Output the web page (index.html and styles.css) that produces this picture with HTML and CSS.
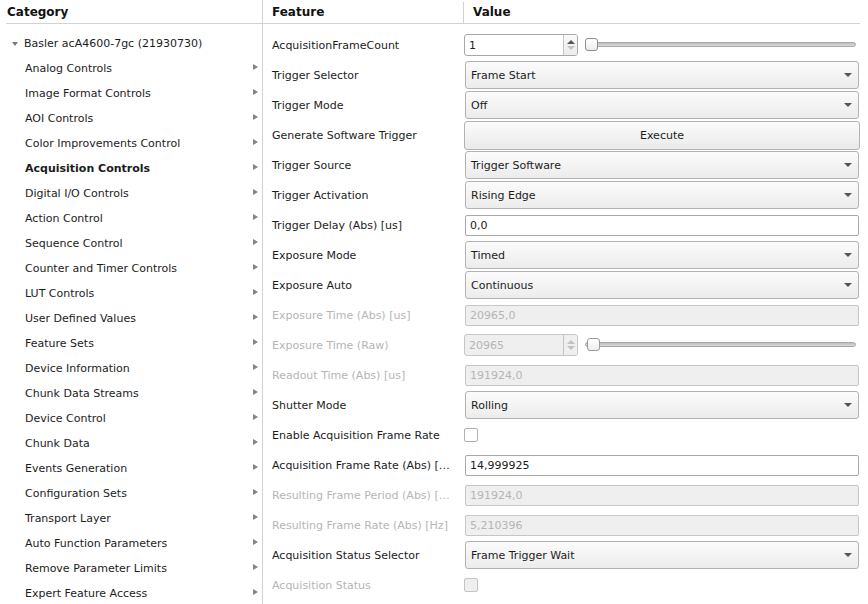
FILE: index.html
```html
<!DOCTYPE html>
<html>
<head>
<meta charset="utf-8">
<link rel="stylesheet" href="styles.css">
</head>
<body>
<div class="app">
  <aside class="cat">
    <div class="cat-hdr">Category</div>
    <ul class="tree">
      <li class="root"><span class="tri-down"></span>Basler acA4600-7gc (21930730)</li>
      <li class="item">Analog Controls<span class="tri-right"></span></li>
      <li class="item">Image Format Controls<span class="tri-right"></span></li>
      <li class="item">AOI Controls<span class="tri-right"></span></li>
      <li class="item">Color Improvements Control<span class="tri-right"></span></li>
      <li class="item sel">Acquisition Controls<span class="tri-right"></span></li>
      <li class="item">Digital I/O Controls<span class="tri-right"></span></li>
      <li class="item">Action Control<span class="tri-right"></span></li>
      <li class="item">Sequence Control<span class="tri-right"></span></li>
      <li class="item">Counter and Timer Controls<span class="tri-right"></span></li>
      <li class="item">LUT Controls<span class="tri-right"></span></li>
      <li class="item">User Defined Values<span class="tri-right"></span></li>
      <li class="item">Feature Sets<span class="tri-right"></span></li>
      <li class="item">Device Information<span class="tri-right"></span></li>
      <li class="item">Chunk Data Streams<span class="tri-right"></span></li>
      <li class="item">Device Control<span class="tri-right"></span></li>
      <li class="item">Chunk Data<span class="tri-right"></span></li>
      <li class="item">Events Generation<span class="tri-right"></span></li>
      <li class="item">Configuration Sets<span class="tri-right"></span></li>
      <li class="item">Transport Layer<span class="tri-right"></span></li>
      <li class="item">Auto Function Parameters<span class="tri-right"></span></li>
      <li class="item">Remove Parameter Limits<span class="tri-right"></span></li>
      <li class="item">Expert Feature Access<span class="tri-right"></span></li>
    </ul>
  </aside>
  <main class="feat">
    <div class="feat-hdr">
      <div class="hcell hfeat">Feature</div>
      <div class="hcell hval">Value</div>
    </div>
    <div class="rows">
      <div class="row">
        <div class="lbl">AcquisitionFrameCount</div>
        <div class="val spin-row">
          <div class="spin"><span class="spin-text">1</span><span class="spin-btns"><span class="up"></span><span class="dn dim"></span></span></div>
          <div class="slider"><span class="groove"></span><span class="handle"></span></div>
        </div>
      </div>
      <div class="row"><div class="lbl">Trigger Selector</div><div class="val"><div class="combo">Frame Start<span class="arrow"></span></div></div></div>
      <div class="row"><div class="lbl">Trigger Mode</div><div class="val"><div class="combo">Off<span class="arrow"></span></div></div></div>
      <div class="row"><div class="lbl">Generate Software Trigger</div><div class="val"><div class="btn">Execute</div></div></div>
      <div class="row"><div class="lbl">Trigger Source</div><div class="val"><div class="combo">Trigger Software<span class="arrow"></span></div></div></div>
      <div class="row"><div class="lbl">Trigger Activation</div><div class="val"><div class="combo">Rising Edge<span class="arrow"></span></div></div></div>
      <div class="row"><div class="lbl">Trigger Delay (Abs) [us]</div><div class="val"><div class="field">0,0</div></div></div>
      <div class="row"><div class="lbl">Exposure Mode</div><div class="val"><div class="combo">Timed<span class="arrow"></span></div></div></div>
      <div class="row"><div class="lbl">Exposure Auto</div><div class="val"><div class="combo">Continuous<span class="arrow"></span></div></div></div>
      <div class="row dis"><div class="lbl">Exposure Time (Abs) [us]</div><div class="val"><div class="field off">20965,0</div></div></div>
      <div class="row dis">
        <div class="lbl">Exposure Time (Raw)</div>
        <div class="val spin-row">
          <div class="spin off"><span class="spin-text">20965</span><span class="spin-btns"><span class="up dim"></span><span class="dn dim"></span></span></div>
          <div class="slider off"><span class="groove"></span><span class="handle"></span></div>
        </div>
      </div>
      <div class="row dis"><div class="lbl">Readout Time (Abs) [us]</div><div class="val"><div class="field off">191924,0</div></div></div>
      <div class="row"><div class="lbl">Shutter Mode</div><div class="val"><div class="combo">Rolling<span class="arrow"></span></div></div></div>
      <div class="row"><div class="lbl">Enable Acquisition Frame Rate</div><div class="val"><span class="check"></span></div></div>
      <div class="row"><div class="lbl">Acquisition Frame Rate (Abs) […</div><div class="val"><div class="field">14,999925</div></div></div>
      <div class="row dis"><div class="lbl">Resulting Frame Period (Abs) […</div><div class="val"><div class="field off">191924,0</div></div></div>
      <div class="row dis"><div class="lbl">Resulting Frame Rate (Abs) [Hz]</div><div class="val"><div class="field off">5,210396</div></div></div>
      <div class="row"><div class="lbl">Acquisition Status Selector</div><div class="val"><div class="combo">Frame Trigger Wait<span class="arrow"></span></div></div></div>
      <div class="row dis"><div class="lbl">Acquisition Status</div><div class="val"><span class="check off"></span></div></div>
    </div>
  </main>
</div>
</body>
</html>
```

FILE: styles.css
```css
* { box-sizing: border-box; }
html, body { margin: 0; padding: 0; background: #fff; }
body {
  font-family: "DejaVu Sans", sans-serif;
  font-size: 11px;
  color: #1c1c1c;
  width: 868px;
  height: 604px;
  overflow: hidden;
}
.app {
  display: grid;
  grid-template-columns: 262px 1fr;
  height: 604px;
  padding-top: 2px;
}
.cat-hdr {
  margin-left: 6px;
  padding-left: 1px;
  height: 22px;
  border-bottom: 1px solid #d2d2d2;
  font-weight: bold;
  font-size: 12px;
  line-height: 20px;
  color: #111;
}
.tree {
  list-style: none;
  margin: 0;
  padding: 7px 0 0 0;
}
.tree li {
  height: 25px;
  display: flex;
  align-items: center;
  position: relative;
  white-space: nowrap;
}
.root { padding-left: 12px; }
.item { padding-left: 25px; }
.sel { font-weight: bold; }
.tri-down {
  width: 0; height: 0;
  border-left: 3.5px solid transparent;
  border-right: 3.5px solid transparent;
  border-top: 4px solid #7a7a7a;
  margin-right: 6px;
}
.tri-right {
  position: absolute;
  left: 253px;
  top: 8px;
  width: 0; height: 0;
  border-top: 3.5px solid transparent;
  border-bottom: 3.5px solid transparent;
  border-left: 5px solid #858585;
}
.feat {
  border-left: 1px solid #d2d2d2;
  margin-top: -2px;
  padding-top: 2px;
}
.feat-hdr {
  display: flex;
  height: 22px;
  margin-right: 8px;
  border-bottom: 1px solid #d2d2d2;
  font-weight: bold;
  font-size: 12px;
  color: #111;
}
.hcell { line-height: 20px; }
.hfeat {
  width: 201px;
  padding-left: 9px;
  border-right: 1px solid #d2d2d2;
}
.hval { padding-left: 9px; }
.rows { padding-top: 6px; }
.row {
  display: grid;
  grid-template-columns: 201px 1fr;
  height: 30px;
  padding-right: 9px;
  align-items: center;
}
.lbl { padding-left: 9px; white-space: nowrap; }
.dis .lbl { color: #b5b5b5; }
.val { display: flex; align-items: center; }
.combo {
  flex: 1;
  margin-left: 1px;
  height: 28px;
  border: 1px solid #b2b2b2;
  border-radius: 3px;
  background: linear-gradient(#fbfbfb, #ececec);
  display: flex;
  align-items: center;
  padding-left: 5px;
  position: relative;
}
.arrow {
  position: absolute;
  right: 6px;
  top: 11px;
  width: 0; height: 0;
  border-left: 4px solid transparent;
  border-right: 4px solid transparent;
  border-top: 4px solid #555;
}
.btn {
  flex: 1;
  height: 29px;
  border: 1px solid #b2b2b2;
  border-radius: 3px;
  background: linear-gradient(#fbfbfb, #eaeaea);
  display: flex;
  align-items: center;
  justify-content: center;
  margin-right: -1px;
}
.field {
  flex: 1;
  margin-left: 1px;
  height: 21px;
  border: 1px solid #a9a9a9;
  border-radius: 2px;
  background: #fff;
  display: flex;
  align-items: center;
  padding-left: 4px;
}
.field.off {
  background: #efefef;
  border-color: #c6c6c6;
  color: #b5b5b5;
}
.spin-row { gap: 0; }
.spin {
  width: 114px;
  height: 22px;
  border: 1px solid #a9a9a9;
  border-radius: 3px;
  background: #fff;
  display: flex;
  align-items: stretch;
}
.spin-text {
  flex: 1;
  padding-left: 4px;
  display: flex;
  align-items: center;
}
.spin.off { background: #efefef; border-color: #c6c6c6; color: #b5b5b5; }
.spin-btns {
  width: 14px;
  border-left: 1px solid #c4c4c4;
  display: flex;
  flex-direction: column;
  align-items: center;
  justify-content: center;
  gap: 2px;
  background: linear-gradient(#fafafa, #ececec);
  border-radius: 0 2px 2px 0;
}
.spin.off .spin-btns { background: #efefef; }
.up {
  width: 0; height: 0;
  border-left: 4px solid transparent;
  border-right: 4px solid transparent;
  border-bottom: 4px solid #555;
}
.dn {
  width: 0; height: 0;
  border-left: 4px solid transparent;
  border-right: 4px solid transparent;
  border-top: 4px solid #555;
}
.up.dim { border-bottom-color: #c2c2c2; }
.dn.dim { border-top-color: #c2c2c2; }
.slider {
  flex: 1;
  margin-left: 7px;
  margin-right: 3px;
  height: 16px;
  position: relative;
}
.groove {
  position: absolute;
  left: 2px;
  right: 0;
  top: 5px;
  height: 5px;
  border: 1px solid #a8a8a8;
  border-radius: 3px;
  background: linear-gradient(#bdbdbd, #dadada);
}
.handle {
  position: absolute;
  left: 0;
  top: 1px;
  width: 13px;
  height: 13px;
  border: 1px solid #8c8c8c;
  border-radius: 3px;
  background: linear-gradient(#ffffff, #ededed);
}
.slider.off .groove { left: 0; }
.slider.off .handle { left: 2px; border-color: #9a9a9a; }
.check {
  width: 14px;
  height: 14px;
  border: 1px solid #b0b0b0;
  border-radius: 2px;
  background: #fff;
  display: block;
}
.check.off { background: #efefef; border-color: #c4c4c4; }
```
